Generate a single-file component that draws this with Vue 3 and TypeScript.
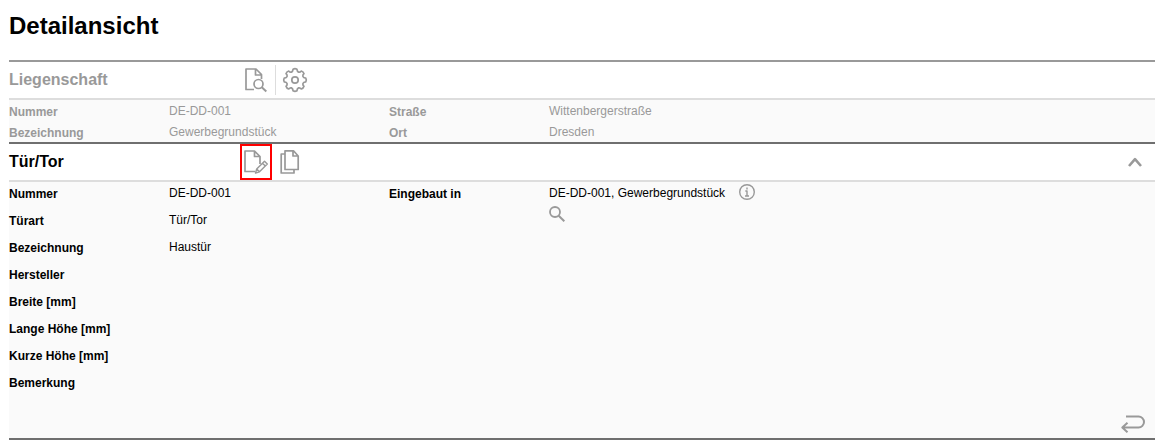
<script setup lang="ts">
import { ref } from 'vue'

interface Field {
  label: string
  value?: string
}

const propertyFields: Field[][] = [
  [
    { label: 'Nummer', value: 'DE-DD-001' },
    { label: 'Bezeichnung', value: 'Gewerbegrundstück' },
  ],
  [
    { label: 'Straße', value: 'Wittenbergerstraße' },
    { label: 'Ort', value: 'Dresden' },
  ],
]

const doorFields: Field[] = [
  { label: 'Nummer', value: 'DE-DD-001' },
  { label: 'Türart', value: 'Tür/Tor' },
  { label: 'Bezeichnung', value: 'Haustür' },
  { label: 'Hersteller' },
  { label: 'Breite [mm]' },
  { label: 'Lange Höhe [mm]' },
  { label: 'Kurze Höhe [mm]' },
  { label: 'Bemerkung' },
]

const open = ref(true)
</script>

<template>
  <main class="page">
    <h1>Detailansicht</h1>

    <section class="panel parent">
      <header class="bar">
        <h2>Liegenschaft</h2>
        <button type="button" class="tool" aria-label="Liegenschaft anzeigen">
          <svg width="24" height="26" viewBox="0 0 24 26">
            <path d="M10 22.500H2V2h10l5.500 5.500V12M11.500 2v6h6" />
            <circle cx="14.500" cy="17" r="4.500" />
            <path d="M17.800 20.300l4.500 4.200" class="thick" />
          </svg>
        </button>
        <span class="divider"></span>
        <button type="button" class="tool" aria-label="Einstellungen">
          <svg width="26" height="26" viewBox="-13 -13 26 26">
            <path d="M-1.900-10.800A4 4 0 0 1 1.900-10.800C2.200-7.600 4.600-6.900 6.300-9A4 4 0 0 1 9-6.300C6.900-4.600 7.600-2.200 10.800-1.900A4 4 0 0 1 10.800 1.900C7.600 2.200 6.900 4.600 9 6.300A4 4 0 0 1 6.300 9C4.600 6.900 2.200 7.600 1.900 10.800A4 4 0 0 1-1.900 10.800C-2.200 7.600-4.600 6.900-6.300 9A4 4 0 0 1-9 6.300C-6.900 4.600-7.600 2.200-10.800 1.900A4 4 0 0 1-10.800-1.900C-7.600-2.200-6.900-4.600-9-6.300A4 4 0 0 1-6.300-9C-4.600-6.900-2.200-7.600-1.900-10.800Z" />
            <circle cx="0" cy="0" r="3.200" />
          </svg>
        </button>
      </header>
      <div class="body columns">
        <dl v-for="(group, i) in propertyFields" :key="i">
          <div v-for="field in group" :key="field.label" class="row">
            <dt>{{ field.label }}</dt>
            <dd>{{ field.value }}</dd>
          </div>
        </dl>
      </div>
    </section>

    <section class="panel door">
      <header class="bar">
        <h2>Tür/Tor</h2>
        <button type="button" class="tool marked" aria-label="Bearbeiten">
          <svg width="26" height="26" viewBox="0 0 26 26">
            <path d="M12 22.500H2V2h9.500l5.500 5.500V15M11.500 2v5.500H17" />
            <path d="M12.500 24l1.200-4 7.800-7.800 2.800 2.800-7.800 7.800zM19.500 14.200l2.800 2.800M13.700 20l2.800 2.800" class="fine" />
          </svg>
        </button>
        <button type="button" class="tool copy" aria-label="Kopieren">
          <svg width="22" height="26" viewBox="0 0 22 26">
            <path d="M6 1.800h8.500L19.200 7v13.500H6zM14 1.800V7h5.200" />
            <path d="M6 5H2.200v19H15v-3.500" />
          </svg>
        </button>
        <button type="button" class="tool toggle" aria-label="Abschnitt ein- oder ausklappen" :aria-expanded="open" @click="open = !open">
          <svg width="16" height="14" viewBox="0 0 16 14">
            <path d="M2 11L8 4.200l6 6.800" class="chevron" />
          </svg>
        </button>
      </header>
      <div v-show="open" class="body">
        <div class="columns">
          <dl>
            <div v-for="field in doorFields" :key="field.label" class="row">
              <dt>{{ field.label }}</dt>
              <dd>{{ field.value }}</dd>
            </div>
          </dl>
          <dl>
            <div class="row">
              <dt>Eingebaut in</dt>
              <dd class="place">
                <span class="place-name">DE-DD-001, Gewerbegrundstück</span>
                <button type="button" class="icon" aria-label="Information">
                  <svg width="16" height="16" viewBox="0 0 16 16">
                    <circle cx="8" cy="8" r="7.300" class="fine" />
                    <path d="M8 3.500v2M6.300 7H8v5M6 12h4" class="fine" />
                  </svg>
                </button>
              </dd>
              <dd class="lookup">
                <button type="button" class="icon" aria-label="Suchen">
                  <svg width="16" height="16" viewBox="0 0 16 16">
                    <circle cx="6" cy="6" r="5" class="lens" />
                    <path d="M9.700 9.700L15.300 15.300" class="thick" />
                  </svg>
                </button>
              </dd>
            </div>
          </dl>
        </div>
        <footer>
          <button type="button" class="icon" aria-label="Zurück">
            <svg width="26" height="20" viewBox="0 0 26 20">
              <path d="M6 2.500h12.500a5.500 5.500 0 0 1 0 11H2.500M7.500 8.800L2.300 13.500l5.200 4.800" class="thick" />
            </svg>
          </button>
        </footer>
      </div>
    </section>
  </main>
</template>

<style>
body {
  margin: 0;
  background: #fff;
}
</style>

<style scoped>
.page {
  padding: 10px 7px 4px 9px;
  font: 12px/16px Arial, "Liberation Sans", sans-serif;
  color: #000;
}
h1 {
  margin: 0 0 18px;
  font-size: 24px;
  line-height: 32px;
}
.panel {
  border-top: 2px solid #6f6f6f;
}
.parent {
  border-top-color: #999;
  color: #999;
}
.door {
  border-bottom: 2px solid #6f6f6f;
}
.bar {
  display: flex;
  align-items: center;
  height: 36px;
  border-bottom: 2px solid #ddd;
}
h2 {
  flex: 0 0 231px;
  margin: 0;
  font-size: 16px;
  line-height: 20px;
}
button {
  display: flex;
  align-items: center;
  justify-content: center;
  box-sizing: border-box;
  padding: 0;
  border: 0;
  background: none;
  cursor: pointer;
}
.tool {
  width: 32px;
  height: 36px;
}
.marked {
  border: 2px solid #f00;
}
.copy {
  margin-left: 2px;
}
.toggle {
  margin-left: auto;
  margin-right: 4px;
}
.divider {
  width: 1px;
  height: 30px;
  margin: 0 3px;
  background: #ddd;
}
.body {
  background: #fafafa;
}
.columns {
  display: grid;
  grid-template-columns: 380px 1fr;
}
dl,
dd {
  margin: 0;
}
.row {
  display: grid;
  grid-template-columns: 160px 1fr;
  align-content: start;
  min-height: 21px;
}
.door .row {
  min-height: 27px;
}
dt {
  padding-top: 4px;
  font-weight: bold;
}
dd {
  padding-top: 3px;
}
.place {
  display: flex;
  align-items: flex-start;
  gap: 8px;
}
.place-name {
  min-width: 182px;
}
.place .icon {
  margin-top: -1px;
}
.lookup {
  grid-column: 2;
  padding-top: 4px;
}
footer {
  display: flex;
  justify-content: flex-end;
  padding: 16px 9px 4px 0;
}
svg {
  display: block;
  flex: none;
  fill: none;
  stroke: #999;
  stroke-width: 1.7;
  stroke-linejoin: round;
}
.thick {
  stroke-width: 2;
}
.lens {
  stroke-width: 1.8;
}
.fine {
  stroke-width: 1.4;
}
.chevron {
  stroke-width: 2.6;
}
</style>
